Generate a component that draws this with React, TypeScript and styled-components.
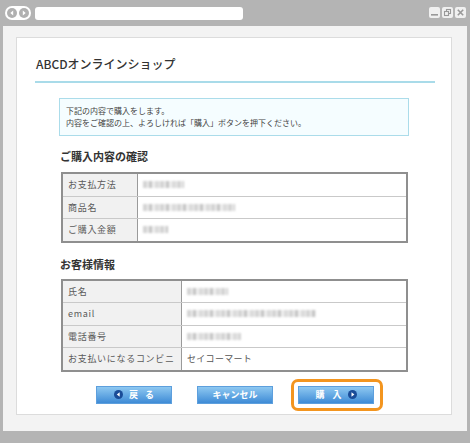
import styled, { createGlobalStyle } from "styled-components";

const GlobalStyle = createGlobalStyle`
    body {
        margin: 0;
        background: #b4b4b4;
        font-family: "Noto Sans CJK JP", "Noto Sans", sans-serif;
    }
`

const Window = styled.div`
    width: 470px;
    height: 443px;
    background: #b4b4b4;
    display: flex;
    flex-direction: column;
`

const TitleBar = styled.div`
    height: 26px;
    display: flex;
    align-items: center;
    padding: 0 4px 0 5px;
    gap: 4px;
    box-sizing: border-box;
`

const NavPill = styled.div`
    width: 26px;
    height: 14px;
    background: #fff;
    border-radius: 7px;
    display: flex;
    align-items: center;
    justify-content: center;
    gap: 2px;
`

const AddressBar = styled.div`
    width: 208px;
    height: 13px;
    background: #fff;
    border-radius: 3px;
`

const Controls = styled.div`
    margin-left: auto;
    display: flex;
    gap: 2px;
    margin-top: -2px;
`

const CtrlButton = styled.div`
    width: 11px;
    height: 11px;
    background: #f0f0f0;
    border-radius: 2px;
    display: flex;
    align-items: center;
    justify-content: center;
`

const Viewport = styled.div`
    margin: 0 3px;
    height: 405px;
    background: #f3f3f3;
    padding: 11px 15px 16px 13px;
    box-sizing: border-box;
`

const Card = styled.div`
    height: 100%;
    background: #fff;
    border: 1px solid #dcdcdc;
    padding: 17px 16px 0 18px;
    box-sizing: border-box;
    display: flex;
    flex-direction: column;
`

const ShopTitle = styled.h1`
    margin: 0;
    padding: 0 0 8px 1px;
    font-size: 12px;
    line-height: 18px;
    font-weight: 500;
    color: #333;
    border-bottom: 2px solid #a9dbe9;
`

const Body = styled.div`
    padding: 0 26px 0 24px;
    display: flex;
    flex-direction: column;
`

const InfoBox = styled.div`
    margin-top: 15px;
    border: 1px solid #abdcea;
    background: #f5fdff;
    padding: 6px 6px;
    font-size: 8px;
    line-height: 12px;
    color: #444;
`

const SectionHeading = styled.h2<{ $gap: number }>`
    margin: ${p => p.$gap}px 0 0 1px;
    font-size: 11px;
    line-height: 16px;
    font-weight: bold;
    color: #333;
`

const Table = styled.div<{ $gap: number }>`
    margin: ${p => p.$gap}px 1px 0 2px;
    border: 2px solid #8f8f8f;
    display: flex;
    flex-direction: column;
`

const Row = styled.div<{ $labelWidth: number }>`
    display: grid;
    grid-template-columns: ${p => p.$labelWidth}px 1fr;
    height: 21.5px;

    & + & {
        border-top: 1px solid #c9c9c9;
    }
`

const Label = styled.div`
    background: #f1f1f1;
    border-right: 1px solid #9a9a9a;
    padding-left: 5px;
    display: flex;
    align-items: center;
    font-size: 9px;
    letter-spacing: .7px;
    color: #5a5a5a;
`

const Value = styled.div`
    padding-left: 5px;
    display: flex;
    align-items: center;
    font-size: 9px;
    letter-spacing: .3px;
    color: #555;
`

const Mosaic = styled.span<{ $width: number }>`
    display: block;
    width: ${p => p.$width}px;
    height: 7px;
    background: repeating-linear-gradient(90deg,
        #d4d4d4 0 4px, #ececec 4px 6px, #c4c4c4 6px 9px, #efefef 9px 12px, #dadada 12px 16px, #f2f2f2 16px 17px);
    filter: blur(.9px);
`

const ButtonBar = styled.div`
    margin-top: 14px;
    display: flex;
    justify-content: center;
    gap: 25px;
`

const Highlight = styled.div`
    position: relative;

    &::after {
        content: "";
        position: absolute;
        inset: -7px -9px -7px -7px;
        border: 3px solid #f3951f;
        border-radius: 7px;
        pointer-events: none;
    }
`

const Button = styled.button`
    width: 76px;
    height: 18px;
    padding: 0;
    border: 1px solid #5d9fdd;
    background: linear-gradient(#8ec8f1, #3e8bd6);
    color: #fff;
    font-family: inherit;
    font-size: 9px;
    font-weight: bold;
    display: flex;
    align-items: center;
    justify-content: center;
    gap: 6px;
    box-sizing: border-box;
`

const Caption = styled.span<{ $spacing: number }>`
    display: flex;
    gap: ${p => p.$spacing}px;
`

function ArrowIcon({ dir }: { dir: "left" | "right" }) {
    return (
        <svg width="9" height="9" viewBox="0 0 10 10">
            <circle cx="5" cy="5" r="5" fill="#1a4c98" />
            {dir === "left"
                ? <path d="M6.3 2.6 L3.1 5 L6.3 7.4 Z" fill="#fff" />
                : <path d="M3.9 2.6 L7.1 5 L3.9 7.4 Z" fill="#fff" />}
        </svg>
    )
}

function NavCircle({ dir }: { dir: "left" | "right" }) {
    return (
        <svg width="10" height="10" viewBox="0 0 10 10">
            <circle cx="5" cy="5" r="5" fill="#b0b0b0" />
            {dir === "left"
                ? <path d="M6.2 2.6 L3.3 5 L6.2 7.4 Z" fill="#fff" />
                : <path d="M3.8 2.6 L6.7 5 L3.8 7.4 Z" fill="#fff" />}
        </svg>
    )
}

interface Field {
    label: string;
    value?: string;
    blur?: number;
}

const orderFields: Field[] = [
    { label: "お支払方法", blur: 41 },
    { label: "商品名", blur: 92 },
    { label: "ご購入金額", blur: 25 },
]

const customerFields: Field[] = [
    { label: "氏名", blur: 41 },
    { label: "email", blur: 129 },
    { label: "電話番号", blur: 54 },
    { label: "お支払いになるコンビニ", value: "セイコーマート" },
]

function InfoTable({ fields, labelWidth, gap }: { fields: Field[], labelWidth: number, gap: number }) {
    return (
        <Table $gap={gap}>
            {fields.map(f => (
                <Row key={f.label} $labelWidth={labelWidth}>
                    <Label>{f.label}</Label>
                    <Value>{f.value ?? <Mosaic $width={f.blur ?? 40} />}</Value>
                </Row>
            ))}
        </Table>
    )
}

export default function App() {
    return (
        <>
            <GlobalStyle />
            <Window>
                <TitleBar>
                    <NavPill>
                        <NavCircle dir="left" />
                        <NavCircle dir="right" />
                    </NavPill>
                    <AddressBar />
                    <Controls>
                        <CtrlButton>
                            <svg width="9" height="9" viewBox="0 0 9 9">
                                <rect x="1" y="6" width="7" height="1.6" fill="#999" />
                            </svg>
                        </CtrlButton>
                        <CtrlButton>
                            <svg width="9" height="9" viewBox="0 0 9 9" fill="none" stroke="#999" strokeWidth="1.1">
                                <rect x="3.5" y="1.5" width="4" height="4" />
                                <rect x="1.5" y="3.5" width="4" height="4" fill="#f0f0f0" />
                            </svg>
                        </CtrlButton>
                        <CtrlButton>
                            <svg width="9" height="9" viewBox="0 0 9 9" stroke="#999" strokeWidth="1.6">
                                <path d="M1.8 1.8 L7.2 7.2 M7.2 1.8 L1.8 7.2" />
                            </svg>
                        </CtrlButton>
                    </Controls>
                </TitleBar>
                <Viewport>
                    <Card>
                        <ShopTitle>ABCDオンラインショップ</ShopTitle>
                        <Body>
                            <InfoBox>
                                下記の内容で購入をします。<br />
                                内容をご確認の上、よろしければ「購入」ボタンを押下ください。
                            </InfoBox>
                            <SectionHeading $gap={12}>ご購入内容の確認</SectionHeading>
                            <InfoTable fields={orderFields} labelWidth={75} gap={8} />
                            <SectionHeading $gap={13}>お客様情報</SectionHeading>
                            <InfoTable fields={customerFields} labelWidth={119} gap={7} />
                        </Body>
                        <ButtonBar>
                            <Button>
                                <ArrowIcon dir="left" />
                                <Caption $spacing={7}><span>戻</span><span>る</span></Caption>
                            </Button>
                            <Button>
                                <Caption $spacing={0.5}>キャンセル</Caption>
                            </Button>
                            <Highlight>
                                <Button>
                                    <Caption $spacing={8}><span>購</span><span>入</span></Caption>
                                    <ArrowIcon dir="right" />
                                </Button>
                            </Highlight>
                        </ButtonBar>
                    </Card>
                </Viewport>
            </Window>
        </>
    )
}
